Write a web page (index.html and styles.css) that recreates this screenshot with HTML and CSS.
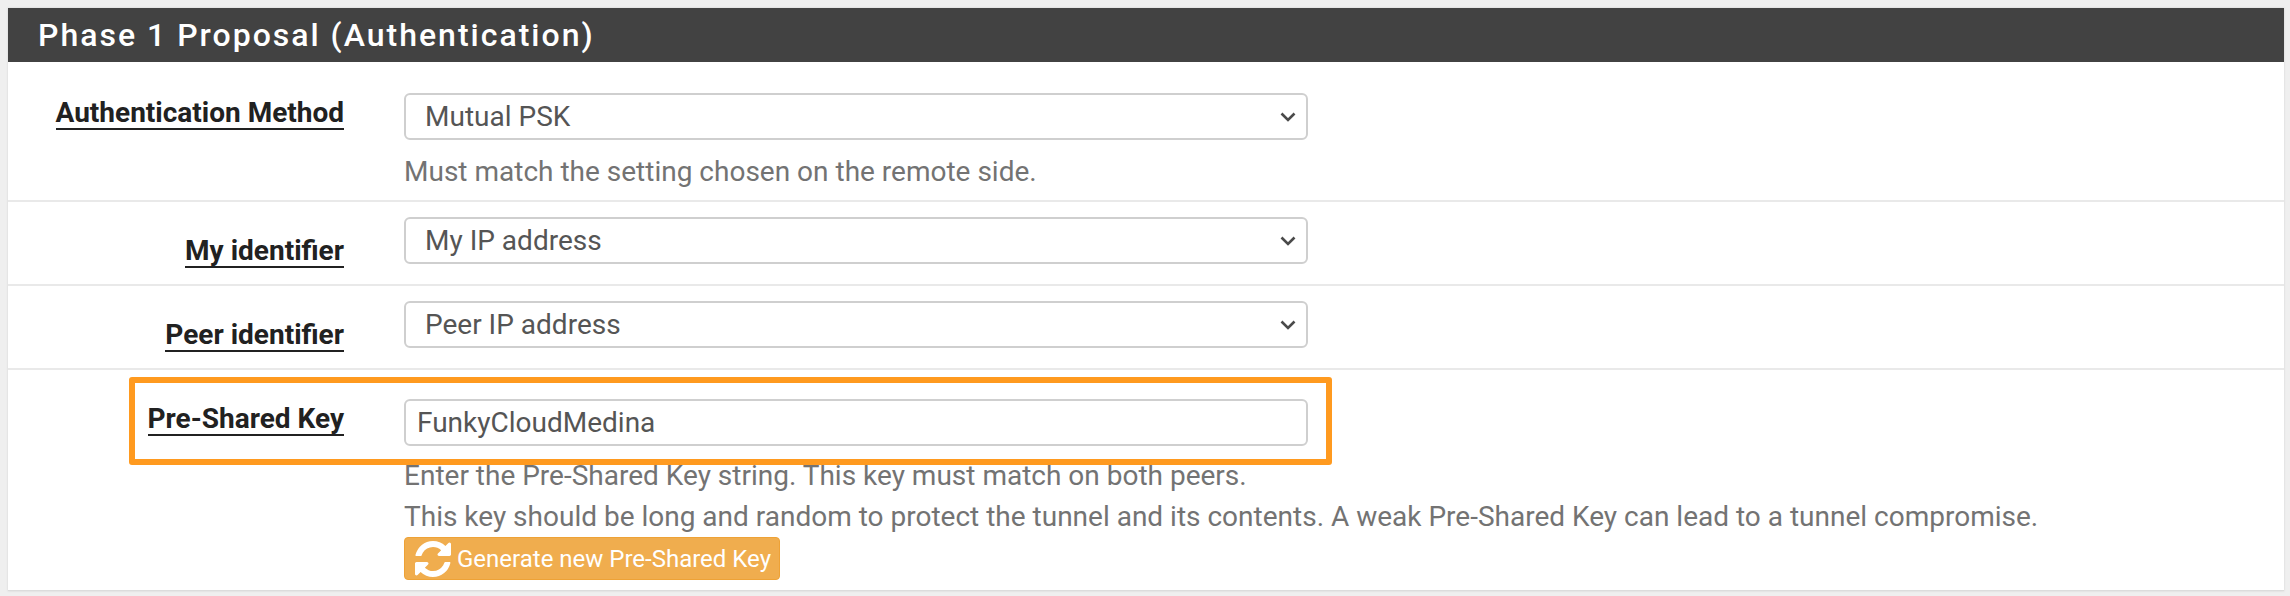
FILE: index.html
```html
<!DOCTYPE html>
<html>
	<head>
		<title>Phase 1 Proposal (Authentication)</title>
		<link rel="stylesheet" href="styles.css">
	</head>
	<body>
		<div class="panel">
			<h2 class="panel-title">Phase 1 Proposal (Authentication)</h2>
			<div class="row row-first">
				<div class="label-col"><span class="label">Authentication Method</span></div>
				<div class="control-col">
					<div class="select-wrap">
						<select><option>Mutual PSK</option></select>
						<svg class="chevron" viewBox="0 0 16 10"><path d="M1.5 1.5 8 8l6.5-6.5" fill="none" stroke="#4a4a4a" stroke-width="2.6"/></svg>
					</div>
					<p class="help help-first">Must match the setting chosen on the remote side.</p>
				</div>
			</div>
			<div class="row row-my">
				<div class="label-col label-low"><span class="label">My identifier</span></div>
				<div class="control-col">
					<div class="select-wrap">
						<select><option>My IP address</option></select>
						<svg class="chevron" viewBox="0 0 16 10"><path d="M1.5 1.5 8 8l6.5-6.5" fill="none" stroke="#4a4a4a" stroke-width="2.6"/></svg>
					</div>
				</div>
			</div>
			<div class="row row-peer">
				<div class="label-col label-low"><span class="label">Peer identifier</span></div>
				<div class="control-col">
					<div class="select-wrap">
						<select><option>Peer IP address</option></select>
						<svg class="chevron" viewBox="0 0 16 10"><path d="M1.5 1.5 8 8l6.5-6.5" fill="none" stroke="#4a4a4a" stroke-width="2.6"/></svg>
					</div>
				</div>
			</div>
			<div class="row row-key">
				<div class="label-col"><span class="label">Pre-Shared Key</span></div>
				<div class="control-col">
					<input type="text" value="FunkyCloudMedina">
					<p class="help help-key">Enter the Pre-Shared Key string. This key must match on both peers.</p>
					<p class="help help-long">This key should be long and random to protect the tunnel and its contents. A weak Pre-Shared Key can lead to a tunnel compromise.</p>
					<button type="button" class="btn-generate">
						<svg class="refresh" viewBox="0 0 1792 1792"><path fill="#fff" d="M1639 1056q0 5-1 7-64 268-268 434.5t-478 166.5q-146 0-282.5-55t-243.5-157l-129 129q-19 19-45 19t-45-19-19-45v-448q0-26 19-45t45-19h448q26 0 45 19t19 45-19 45l-137 137q71 66 161 102t187 36q134 0 250-65t186-179q11-17 53-117 8-23 30-23h192q13 0 22.5 9.5t9.5 22.5zm25-800v448q0 26-19 45t-45 19h-448q-26 0-45-19t-19-45 19-45l138-138q-148-137-349-137-134 0-250 65t-186 179q-11 17-53 117-8 23-30 23h-199q-13 0-22.5-9.5t-9.5-22.5v-7q65-268 270-434.5t480-166.5q146 0 284 55.5t245 156.5l130-129q19-19 45-19t45 19 19 45z"/></svg>
						Generate new Pre-Shared Key
					</button>
				</div>
			</div>
			<div class="highlight"></div>
		</div>
	</body>
</html>
```

FILE: styles.css
```css
html, body {
	height: 100%;
}
body {
	margin: 0;
	padding: 8px 6px 0 8px;
	box-sizing: border-box;
	background-color: #efefef;
	font-family: Roboto, sans-serif;
	overflow: hidden;
}

.panel {
	position: relative;
	background-color: #FFFFFF;
	border-bottom: 1px solid #dcdcdc;
	box-shadow: 0 0 2px #cfcfcf;
}
.panel-title {
	margin: 0;
	height: 54px;
	padding-left: 30px;
	background-color: #424242;
	color: #FFFFFF;
	font-size: 32px;
	font-weight: 500;
	letter-spacing: 2px;
	line-height: 54px;
}

.row {
	display: grid;
	grid-template-columns: 336px 904px;
	column-gap: 60px;
	border-bottom: 2px solid #e9e9e9;
}
.row-first {
	padding-top: 31px;
}
.row-first .control-col {
	padding-bottom: 8px;
}
.row-my {
	padding-top: 15px;
}
.row-my .control-col {
	padding-bottom: 20px;
}
.row-peer {
	padding-top: 15px;
}
.row-peer .control-col {
	padding-bottom: 20px;
}
.row-key {
	padding-top: 29px;
	border-bottom: none;
}
.row-key .control-col {
	padding-bottom: 10px;
}

.label-col {
	text-align: right;
	padding-top: 5px;
}
.label-low {
	padding-top: 19px;
}
.label {
	display: inline-block;
	color: #212121;
	font-size: 28px;
	font-weight: 700;
	line-height: 30px;
	border-bottom: 2px solid #212121;
}

.select-wrap {
	position: relative;
}
select, input {
	display: block;
	box-sizing: border-box;
	width: 100%;
	height: 47px;
	border: 2px solid #cfcfcf;
	border-radius: 6px;
	background-color: #FFFFFF;
	color: #555555;
	font-family: Roboto, sans-serif;
	font-size: 28px;
	outline: none;
}
select {
	appearance: none;
	padding: 0 0 0 19px;
}
input {
	padding: 0 0 0 11px;
}
.chevron {
	position: absolute;
	top: 19px;
	right: 12px;
	width: 16px;
	height: 10px;
}

.help {
	margin: 0;
	color: #737373;
	font-size: 28px;
	line-height: 40px;
}
.help-first {
	margin-top: 12px;
}
.help-key {
	margin-top: 10px;
}
.help-long {
	margin-top: 1px;
	white-space: nowrap;
}

.btn-generate {
	display: flex;
	align-items: center;
	gap: 3px;
	box-sizing: border-box;
	height: 43px;
	padding: 0 8px 0 7px;
	border: 1px solid #eea236;
	border-radius: 4px;
	background-color: #f0ad4e;
	color: #FFFFFF;
	font-family: Roboto, sans-serif;
	font-size: 24px;
}
.refresh {
	width: 42px;
	height: 42px;
	flex: none;
}

.highlight {
	position: absolute;
	left: 121px;
	top: 369px;
	width: 1203px;
	height: 88px;
	box-sizing: border-box;
	border: 6px solid #ff9a1f;
	border-radius: 3px;
}
```
